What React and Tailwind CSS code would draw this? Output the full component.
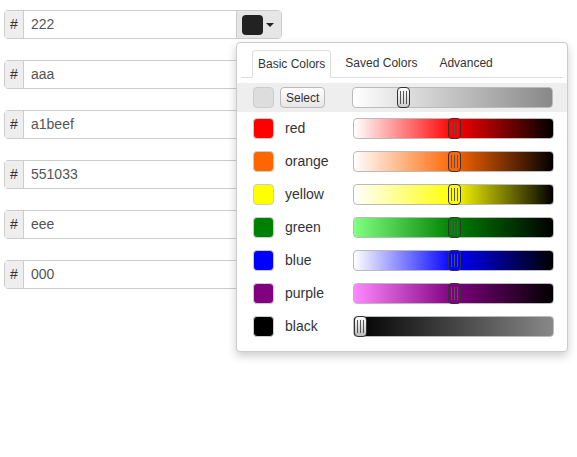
import React from "react";

const values = ["222", "aaa", "a1beef", "551033", "eee", "000"];

const colors = [
	{ name: "red", hex: "#ff0000", grad: "linear-gradient(to right,#fff,#f00 50%,#000)", pos: 50 },
	{ name: "orange", hex: "#ff6600", grad: "linear-gradient(to right,#fff,#f60 50%,#000)", pos: 50 },
	{ name: "yellow", hex: "#ffff00", grad: "linear-gradient(to right,#fff,#ff0 50%,#000)", pos: 50 },
	{ name: "green", hex: "#008000", grad: "linear-gradient(to right,#fff,#0f0 0%,#0f0 0%,#80ff80 0%,#008000 50%,#000)", pos: 50 },
	{ name: "blue", hex: "#0000ff", grad: "linear-gradient(to right,#fff,#00f 50%,#000)", pos: 50 },
	{ name: "purple", hex: "#800080", grad: "linear-gradient(to right,#fff,#f0f 0%,#f8f 0%,#800080 50%,#000)", pos: 50 },
	{ name: "black", hex: "#000000", grad: "linear-gradient(to right,#000,#888)", pos: 0 },
];

const Slider = ({ grad, pos, thumb }) => (
	<div className="relative h-[21px] w-[201px] rounded border border-[#bbb]" style={{ background: grad }}>
		<div
			className="absolute top-[-1px] flex h-[21px] w-[13px] items-center justify-center gap-[2px] rounded-sm border border-[#333]"
			style={{ left: `calc(${pos}% - ${pos === 0 ? 0 : 6}px)`, background: thumb }}
		>
			<span className="h-[13px] w-px bg-[#555]" />
			<span className="h-[13px] w-px bg-[#555]" />
			<span className="h-[13px] w-px bg-[#555]" />
		</div>
	</div>
);

export default function App() {
	return (
		<div className="relative h-[457px] w-[577px] bg-white text-[13px] text-[#333]" style={{ fontFamily: "Arial, 'Liberation Sans', sans-serif" }}>
			<div className="flex flex-col gap-[21px] pl-1 pt-[10px]">
				{values.map((v, i) => (
					<div key={v} className="flex h-[29px] w-[278px] rounded border border-[#ccc]">
						<span className="flex w-[19px] items-center justify-center border-r border-[#ccc] bg-[#eee] text-[14px]">#</span>
						<span className="flex flex-1 items-center pl-[7px] text-[14px] text-[#555]">{v}</span>
						{i === 0 && (
							<span className="flex w-[45px] items-center gap-[3px] border-l border-[#ccc] bg-[#e6e6e6] pl-[5px]">
								<span className="h-[20px] w-[21px] rounded-sm bg-[#222]" />
								<span className="h-0 w-0 border-x-[4px] border-t-[4px] border-x-transparent border-t-[#222]" />
							</span>
						)}
					</div>
				))}
			</div>

			<div className="absolute left-[236px] top-[42px] h-[310px] w-[332px] rounded border border-[#ccc] bg-white shadow-[0_4px_10px_rgba(0,0,0,0.2)]">
				<div className="mx-[4px] mt-[7px] flex h-[28px] items-end gap-[2px] border-b border-[#ddd] pl-[11px] text-[12px]">
					<span className="mb-[-1px] flex h-[28px] items-center rounded-t border border-b-white border-[#ddd] bg-white px-[5px]">Basic Colors</span>
					<span className="flex h-[28px] items-center px-[12px]">Saved Colors</span>
					<span className="flex h-[28px] items-center px-[8px]">Advanced</span>
				</div>
				<div className="mt-[5px] flex h-[29px] items-center bg-[#eee] pl-[16px]">
					<span className="h-[21px] w-[21px] rounded border border-[#ccc] bg-[#ddd]" />
					<span className="ml-[6px] flex h-[21px] items-center rounded border border-[#bbb] bg-gradient-to-b from-white to-[#e6e6e6] px-[5px] text-[12px]">Select</span>
					<span className="ml-[27px]">
						<Slider grad="linear-gradient(to right,#fff,#888)" pos={25} thumb="linear-gradient(#fff,#ccc)" />
					</span>
				</div>
				<div className="flex flex-col">
					{colors.map((c) => (
						<div key={c.name} className="flex h-[33px] items-center pl-[16px]">
							<span className="h-[21px] w-[21px] rounded border border-[#ccc]" style={{ background: c.hex }} />
							<span className="ml-[11px] w-[68px] text-[14px]">{c.name}</span>
							<Slider grad={c.grad} pos={c.pos} thumb={c.name === "black" ? "linear-gradient(#fff,#bbb)" : c.hex} />
						</div>
					))}
				</div>
			</div>
		</div>
	);
}
